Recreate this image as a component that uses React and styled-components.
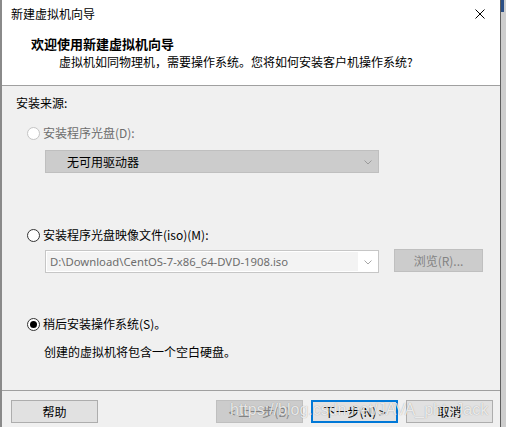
import React from "react";
import styled, { createGlobalStyle } from "styled-components";

const Global = createGlobalStyle`
  html, body { margin: 0; padding: 0; background: #f0f0f0; }
  body { font-family: "Noto Sans CJK SC", "Noto Sans", sans-serif; font-size: 12px; color: #000; }
  * { box-sizing: border-box; }
`;

const Page = styled.div`
  display: flex;
  width: 506px;
  height: 427px;
  overflow: hidden;
  position: relative;
`;

const Window = styled.div`
  width: 501px;
  height: 427px;
  display: flex;
  flex-direction: column;
  border-left: 2px solid #8a8a8a;
  border-right: 1px solid #5e5e5e;
  background: #f0f0f0;
`;

const Backdrop = styled.div`
  flex: 1;
  background: #cdcdcd;
  display: flex;
  flex-direction: column;
`;

const BackdropAccent = styled.div`
  height: 12px;
  width: 3px;
  background: #2b4f86;
`;

const Header = styled.div`
  background: #fff;
  height: 86px;
  border-bottom: 1px solid #a0a0a0;
  display: flex;
  flex-direction: column;
`;

const TitleBar = styled.div`
  height: 28px;
  display: flex;
  align-items: center;
  justify-content: space-between;
  padding-left: 9px;
  padding-right: 15px;
  font-size: 12px;
  line-height: 16px;
`;

const Close = styled.svg`
  width: 10px;
  height: 10px;
  margin-top: -1px;
`;

const HeaderTitle = styled.div`
  margin-top: 7px;
  margin-left: 29px;
  font-size: 13px;
  font-weight: bold;
  line-height: 18px;
`;

const HeaderSub = styled.div`
  margin-left: 57px;
  font-size: 12px;
  line-height: 18px;
`;

const Body = styled.div`
  flex: 1;
  display: flex;
  flex-direction: column;
  padding: 9px 0 0 14px;
`;

const Label = styled.div`
  line-height: 16px;
  height: 16px;
  margin-top: ${(p) => p.$mt || 0}px;
  margin-left: ${(p) => p.$ml || 0}px;
  color: ${(p) => (p.$disabled ? "#6d6d6d" : "#000")};
`;

const RadioRow = styled.div`
  display: flex;
  align-items: center;
  height: 16px;
  margin-top: ${(p) => p.$mt}px;
  margin-left: 11px;
  color: ${(p) => (p.$disabled ? "#6d6d6d" : "#000")};
  line-height: 16px;
`;

const RadioCircle = styled.span`
  width: 13px;
  height: 13px;
  border-radius: 50%;
  border: 1px solid ${(p) => (p.$disabled ? "#c4c4c4" : "#333")};
  background: #fff;
  margin-right: 3px;
  display: flex;
  align-items: center;
  justify-content: center;
  flex-shrink: 0;
`;

const RadioDot = styled.span`
  width: 7px;
  height: 7px;
  border-radius: 50%;
  background: #000;
`;

const Select = styled.div`
  margin-top: ${(p) => p.$mt}px;
  margin-left: 29px;
  width: 334px;
  height: 23px;
  display: flex;
  align-items: center;
  justify-content: space-between;
  background: ${(p) => (p.$disabled ? "#cccccc" : "#fff")};
  border: 1px solid ${(p) => (p.$disabled ? "#bfbfbf" : "#c6c6c6")};
  padding: ${(p) => (p.$disabled ? "0 6px 0 21px" : "1px 6px 1px 1px")};
  flex-shrink: 0;
`;

const SelectField = styled.div`
  height: 100%;
  width: 311px;
  background: #f3f3f3;
  color: #6d6d6d;
  font-family: "Noto Sans", "Open Sans", sans-serif;
  font-size: 11.3px;
  line-height: 19px;
  padding-left: 3px;
  white-space: nowrap;
`;

const Chevron = styled.svg`
  width: 8px;
  height: 5px;
  margin-top: 1px;
`;

const FileRow = styled.div`
  display: flex;
  align-items: flex-start;
  margin-top: 6px;
  gap: 15px;
`;

const FileSelectWrap = styled.div`
  padding-top: 1px;
`;

const Button = styled.button`
  width: ${(p) => p.$w || 87}px;
  height: 23px;
  padding: 0;
  font-family: "Noto Sans CJK SC", "Noto Sans", sans-serif;
  font-size: 12px;
  line-height: 16px;
  background: ${(p) => (p.$disabled ? "#cccccc" : "#e1e1e1")};
  color: ${(p) => (p.$disabled ? "#838383" : "#000")};
  border: ${(p) =>
    p.$primary ? "2px solid #0078d7" : p.$disabled ? "1px solid #bfbfbf" : "1px solid #adadad"};
  display: flex;
  align-items: center;
  justify-content: center;
  flex-shrink: 0;
`;

const Footer = styled.div`
  height: 37px;
  border-top: 1px solid #a0a0a0;
  display: flex;
  align-items: flex-start;
  padding: 9px 0 0 9px;
`;

const Spacer = styled.div`
  width: ${(p) => p.$w}px;
  flex-shrink: 0;
`;

const Watermark = styled.div`
  position: absolute;
  left: 230px;
  top: 399px;
  font-family: "Liberation Sans", Arial, sans-serif;
  font-size: 16px;
  line-height: 22px;
  color: rgba(255, 255, 255, 0.8);
  text-shadow: 0 0 1px rgba(0, 0, 0, 0.35);
  white-space: nowrap;
  pointer-events: none;
`;

const ChevronIcon = ({ color }) => (
  <Chevron viewBox="0 0 8 5">
    <path d="M0.5 0.5 L4 4 L7.5 0.5" fill="none" stroke={color} strokeWidth="1" />
  </Chevron>
);

export default function App() {
  return (
    <>
      <Global />
      <Page>
        <Window>
          <Header>
            <TitleBar>
              <span>新建虚拟机向导</span>
              <Close viewBox="0 0 10 10">
                <path d="M0.5 0.5 L9.5 9.5 M9.5 0.5 L0.5 9.5" stroke="#000" strokeWidth="1" fill="none" />
              </Close>
            </TitleBar>
            <HeaderTitle>欢迎使用新建虚拟机向导</HeaderTitle>
            <HeaderSub>虚拟机如同物理机，需要操作系统。您将如何安装客户机操作系统?</HeaderSub>
          </Header>
          <Body>
            <Label>安装来源:</Label>
            <RadioRow $mt={14} $disabled>
              <RadioCircle $disabled />
              安装程序光盘(D):
            </RadioRow>
            <Select $mt={9} $disabled>
              <span>无可用驱动器</span>
              <ChevronIcon color="#9a9a9a" />
            </Select>
            <RadioRow $mt={54}>
              <RadioCircle />
              安装程序光盘映像文件(iso)(M):
            </RadioRow>
            <FileRow>
              <FileSelectWrap>
                <Select $mt={0}>
                  <SelectField>D:\Download\CentOS-7-x86_64-DVD-1908.iso</SelectField>
                  <ChevronIcon color="#a6a6a6" />
                </Select>
              </FileSelectWrap>
              <Button $w={89} $disabled>浏览(R)...</Button>
            </FileRow>
            <RadioRow $mt={43}>
              <RadioCircle>
                <RadioDot />
              </RadioCircle>
              稍后安装操作系统(S)。
            </RadioRow>
            <Label $mt={12} $ml={28}>创建的虚拟机将包含一个空白硬盘。</Label>
          </Body>
          <Footer>
            <Button>帮助</Button>
            <Spacer $w={118} />
            <Button $disabled>&lt; 上一步(B)</Button>
            <Spacer $w={8} />
            <Button $primary>下一步(N) &gt;</Button>
            <Spacer $w={8} />
            <Button>取消</Button>
          </Footer>
        </Window>
        <Backdrop>
          <BackdropAccent />
        </Backdrop>
        <Watermark>https://blog.csdn.net/JAVA_pht_Jack</Watermark>
      </Page>
    </>
  );
}
